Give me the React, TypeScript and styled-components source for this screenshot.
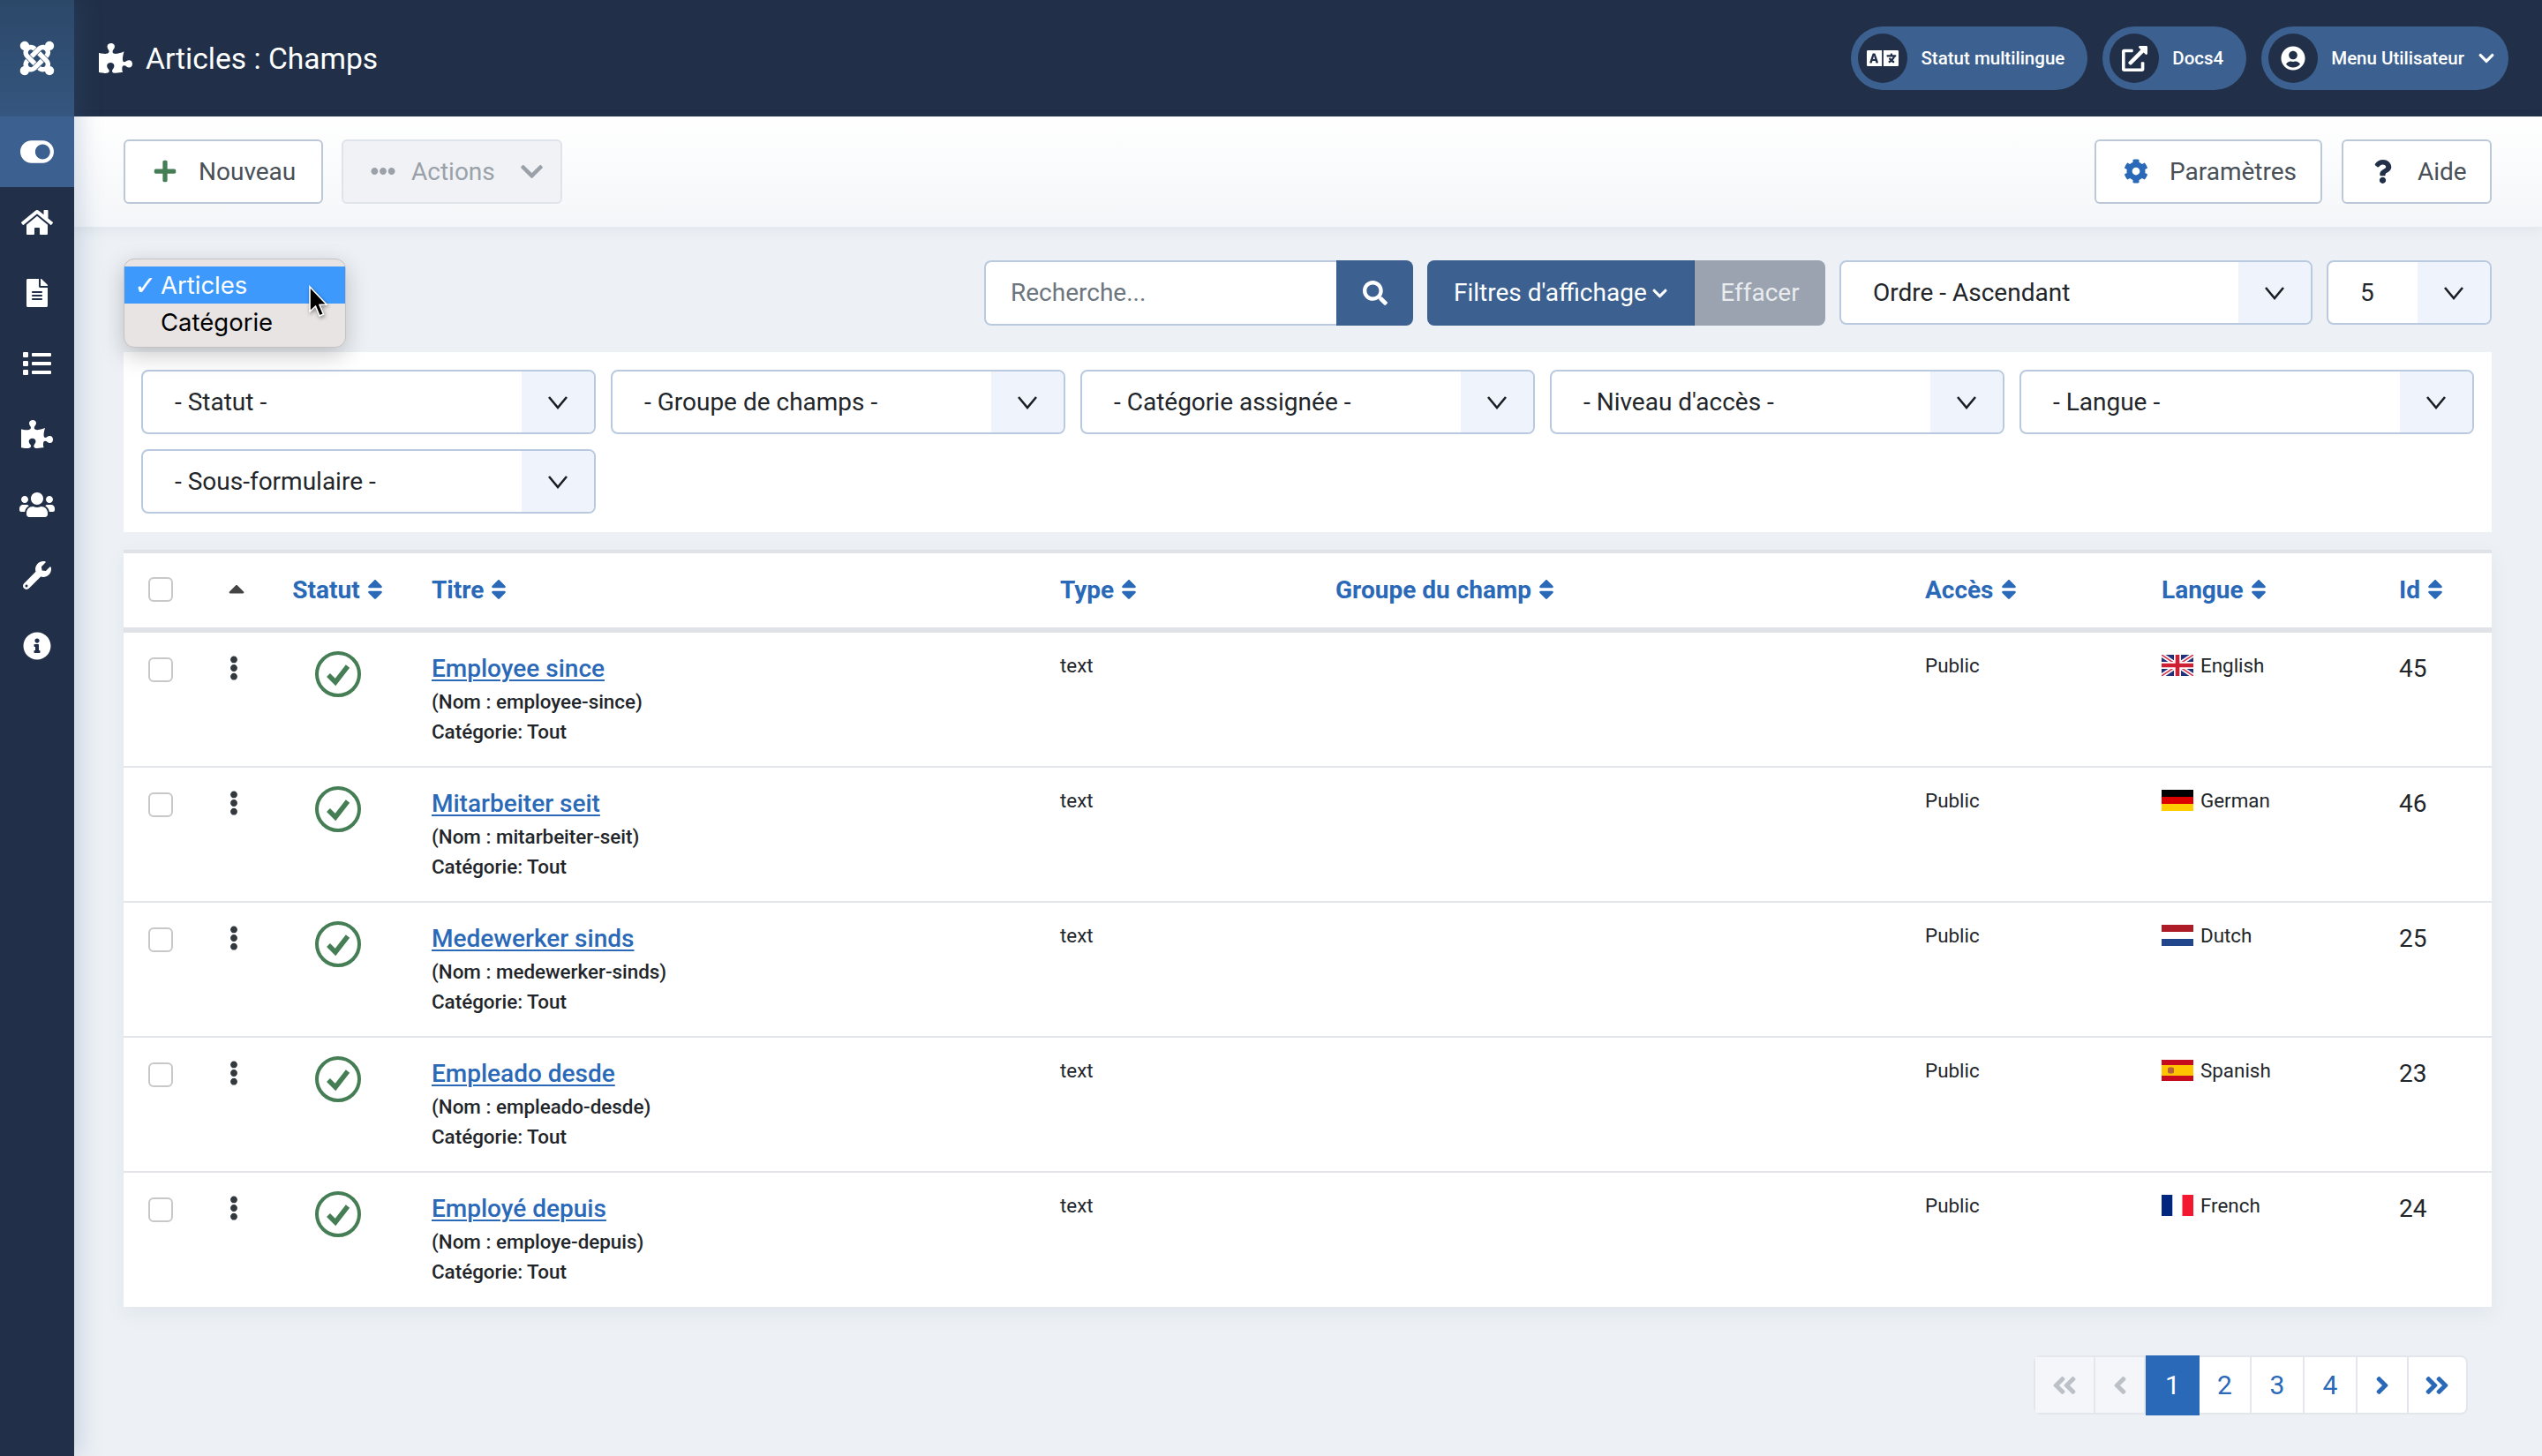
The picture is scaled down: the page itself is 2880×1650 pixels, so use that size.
import React from "react";
import styled, { createGlobalStyle } from "styled-components";
import {
  FaJoomla, FaPuzzlePiece, FaToggleOn, FaHome, FaFileAlt, FaList, FaUsers, FaWrench, FaInfoCircle,
  FaPlus, FaEllipsisH, FaChevronDown, FaCog, FaQuestion, FaLanguage, FaExternalLinkAlt, FaUserCircle,
  FaSearch, FaEllipsisV, FaSort, FaCaretUp, FaAngleDoubleLeft, FaAngleDoubleRight, FaAngleLeft, FaAngleRight,
} from "react-icons/fa";

const Global = createGlobalStyle`
  html, body { margin: 0; padding: 0; height: 100%; overflow: hidden; background: #edf1f5; }
  body { font-family: Roboto, "Liberation Sans", sans-serif; color: #22262a; -webkit-font-smoothing: antialiased; }
  * { box-sizing: border-box; }
`;

const Shell = styled.div`display: flex; width: 2880px; height: 1650px; background: #edf1f5; overflow: hidden;`;
const Sidebar = styled.aside`
  width: 84px; flex: none; background: #213048; display: flex; flex-direction: column; position: relative; z-index: 2;
  box-shadow: 6px 0 26px rgba(60, 97, 144, .22);
`;
const LogoCell = styled.div`
  height: 132px; display: flex; align-items: center; justify-content: center; color: #fff; font-size: 44px;
  background: linear-gradient(180deg, #2c4869 0%, #35567f 100%);
`;
const NavItem = styled.div<{ $active?: boolean; $size?: number }>`
  height: 80px; display: flex; align-items: center; justify-content: center; color: #fff;
  font-size: ${(p) => p.$size ?? 32}px;
  background: ${(p) => (p.$active ? "#3c6190" : "transparent")};
`;
const Main = styled.main`flex: 1; min-width: 0; display: flex; flex-direction: column;`;
const Header = styled.header`
  height: 132px; background: #213048; display: flex; align-items: center; padding: 0 38px 0 28px;
`;
const Title = styled.h1`
  margin: 0; flex: 1; display: flex; align-items: center; gap: 15px; color: #fff; font-size: 33.6px; font-weight: 400;
  svg { width: 38px; height: 34px; }
`;
const Pills = styled.div`display: flex; gap: 17px;`;
const Pill = styled.div`
  height: 72px; border-radius: 36px; background: #3c6190; display: flex; align-items: center; padding: 0 26px 0 8px;
  color: #fff; font-size: 20.5px; font-weight: 500; gap: 15px;
`;
const PillIcon = styled.span<{ $size: number }>`
  width: 56px; height: 56px; border-radius: 50%; background: #213048; display: flex; align-items: center;
  justify-content: center; font-size: ${(p) => p.$size}px; flex: none;
`;
const PillCaret = styled.span`font-size: 20px; display: flex; margin-right: -11px;`;
const Toolbar = styled.div`
  height: 125px; display: flex; align-items: center; justify-content: space-between; padding: 0 57px 1px 56px;
  background: linear-gradient(180deg, #ffffff 0%, #f4f6f9 100%);
  box-shadow: 0 4px 14px rgba(60, 97, 144, .08); position: relative;
`;
const ToolGroup = styled.div<{ $gap: number }>`display: flex; gap: ${(p) => p.$gap}px;`;
const ToolButton = styled.button<{ $w: number; $disabled?: boolean; $gap: number }>`
  width: ${(p) => p.$w}px; height: 73px; border-radius: 6px; font-family: inherit; font-size: 28px;
  border: 2px solid ${(p) => (p.$disabled ? "#dfe4ea" : "#bcc8d8")};
  background: ${(p) => (p.$disabled ? "#f0f2f5" : "#fff")};
  color: ${(p) => (p.$disabled ? "#9aa1a9" : "#495057")};
  display: flex; align-items: center; padding: 0 0 0 31px; gap: ${(p) => p.$gap}px;
`;
const ToolIcon = styled.span<{ $c?: string; $size: number; $ml?: number }>`
  display: flex; color: ${(p) => p.$c ?? "inherit"}; font-size: ${(p) => p.$size}px; margin-left: ${(p) => p.$ml ?? 0}px;
`;
const Content = styled.div`padding: 38px 57px 0 56px; position: relative;`;
const FilterBar = styled.div`display: flex; justify-content: flex-end; gap: 16px; height: 74px;`;
const SearchBox = styled.div`display: flex; height: 74px;`;
const SearchInput = styled.div`
  width: 399px; background: #fff; border: 2px solid #b9cae0; border-right: 0; border-radius: 8px 0 0 8px;
  display: flex; align-items: center; padding: 0 0 2px 28px; font-size: 28px; color: #6c757d;
`;
const SearchBtn = styled.div`
  width: 87px; background: #3c6190; border-radius: 0 8px 8px 0; color: #fff; font-size: 28px;
  display: flex; align-items: center; justify-content: center;
`;
const SplitBtn = styled.div`display: flex; height: 74px;`;
const FilterBtn = styled.div`
  width: 303px; background: #3c6190; border-radius: 8px 0 0 8px; color: #fff; font-size: 28px;
  border-right: 1px solid #2f4f78;
  display: flex; align-items: center; padding: 0 0 2px 30px; gap: 5px;
  svg { font-size: 19px; margin-top: 2px; }
`;
const ClearBtn = styled.div`
  width: 148px; background: #9aa3af; border-radius: 0 8px 8px 0; color: #e9ecef; font-size: 28px; padding-bottom: 2px;
  display: flex; align-items: center; justify-content: center;
`;
const SelectBox = styled.div<{ $w?: number }>`
  width: ${(p) => p.$w ?? 515}px; height: 73px; flex: none; background: #fff;
  border: 2px solid #b9cae0; border-radius: 8px; display: flex; overflow: hidden; font-size: 28px; color: #22262a;
`;
const SelectText = styled.div`flex: 1; display: flex; align-items: center; padding-left: 36px; white-space: nowrap;`;
const SelectChevron = styled.div`
  width: 82px; flex: none; background: #eff4fc; display: flex; align-items: center; justify-content: center;
`;
const FilterPanel = styled.div`
  margin-top: 30px; background: #fff; padding: 20px; height: 204px; display: flex; flex-wrap: wrap;
  gap: 17px; align-content: flex-start;
`;
const TableCard = styled.div`
  margin-top: 20px; background: #fff; border-top: 4px solid #dfe3e8; box-shadow: 0 8px 20px rgba(60, 97, 144, .08);
`;
const cols = "120px 17px 212px 712px 312px 668px 268px 269px 105px";
const HeadRow = styled.div`
  display: grid; grid-template-columns: ${cols}; height: 90px; border-bottom: 6px solid #dfe3e8; align-items: center;
  color: #2a69b8; font-size: 28px; font-weight: 700; padding-bottom: 2px;
`;
const BodyRow = styled.div<{ $last?: boolean }>`
  display: grid; grid-template-columns: ${cols}; height: ${(p) => (p.$last ? 152 : 153)}px;
  border-bottom: ${(p) => (p.$last ? "0" : "2.5px solid #e2e6ea")}; align-items: start; font-size: 22.4px;
`;
const HeadCell = styled.div<{ $center?: boolean }>`
  display: flex; align-items: center; gap: 3px; white-space: nowrap;
  justify-content: ${(p) => (p.$center ? "center" : "flex-start")};
  padding-left: ${(p) => (p.$center ? 4 : 0)}px;
  svg { font-size: 28px; margin-left: -6px; margin-right: 6px; position: relative; left: 6px; }
`;
const CheckCell = styled.div<{ $top?: number }>`padding-left: 28px; padding-top: ${(p) => p.$top ?? 0}px; display: flex;`;
const Check = styled.span`
  width: 28px; height: 28px; border: 2px solid #c8c8c8; border-radius: 6px; background: #fff; display: block;
`;
const Caret = styled.span`display: flex; color: #444; font-size: 30px; margin-top: -2px; margin-left: -1px; svg { display: block; }`;
const DotsCell = styled.div`padding-top: 26px; font-size: 28px; color: #33383d; display: flex; svg { margin-left: -7px; }`;
const StatusCell = styled.div`padding-top: 21px; display: flex; justify-content: center;`;
const TitleCell = styled.div`padding-top: 20px; font-weight: 500;`;
const ItemLink = styled.a`
  display: block; font-size: 28px; line-height: 42px; color: #2a69b8; text-decoration: underline; text-decoration-thickness: 2px;
  text-underline-offset: 3px; width: fit-content;
`;
const SubLine = styled.div`font-size: 22.4px; line-height: 33.5px; color: #22262a;`;
const PlainCell = styled.div`padding-top: 20px; line-height: 34px; font-size: 22.4px;`;
const LangCell = styled.div`padding-top: 20px; line-height: 34px; font-size: 22.4px; display: flex; align-items: center; gap: 8px; svg { flex: none; }`;
const IdCell = styled.div`padding-top: 20px; line-height: 42px; font-size: 28px;`;

const Pager = styled.div`
  margin: 55px 27px 0 auto; width: 492px; height: 67px; display: flex; border: 2.5px solid #e3e7eb; border-radius: 8px; background: #fff;
  position: relative;
`;
const PageCell = styled.div<{ $w: number; $disabled?: boolean; $active?: boolean }>`
  width: ${(p) => p.$w}px; flex: none; display: flex; align-items: center; justify-content: center; font-size: 30px;
  border-right: ${(p) => (p.$active ? "0" : "2.5px solid #e3e7eb")};
  background: ${(p) => (p.$active ? "#2a69b8" : p.$disabled ? "#f4f6f9" : "transparent")};
  color: ${(p) => (p.$active ? "#fff" : p.$disabled ? "#bcc1c7" : "#2a69b8")};
  margin: ${(p) => (p.$active ? "-2.5px 0" : "0")};
  &:last-child { border-right: 0; }
  svg { font-size: 32px; }
`;
const Menu = styled.div`
  position: absolute; left: 56px; top: 36px; width: 252px; height: 101px; background: #e9e4e4; border-radius: 12px;
  border: 1px solid #c4c2c2; padding-top: 8px; box-shadow: 0 8px 26px rgba(0, 0, 0, .22); z-index: 5;
  font-family: Inter, "Liberation Sans", sans-serif; font-size: 27.5px; color: #000;
`;
const MenuItem = styled.div<{ $on?: boolean }>`
  height: 42px; display: flex; align-items: center; padding-left: 41px; position: relative;
  background: ${(p) => (p.$on ? "#3d9afc" : "transparent")}; color: ${(p) => (p.$on ? "#fff" : "#000")};
`;
const Tick = styled.span`position: absolute; left: 11px; font-family: "DejaVu Sans", sans-serif; font-size: 30px;`;
const Pointer = styled.svg`position: absolute; left: 208px; top: 29px; filter: drop-shadow(1px 2px 2px rgba(0,0,0,.4));`;

const Chevron = () => (
  <svg width="24" height="16" viewBox="0 0 24 16" fill="none">
    <path d="M2 2 L12 14 L22 2" stroke="#1b1f24" strokeWidth="2.6" />
  </svg>
);
const StatusIcon = () => (
  <svg width="52" height="52" viewBox="0 0 52 52" fill="none">
    <circle cx="26" cy="26" r="24" stroke="#457d54" strokeWidth="4" />
    <path d="M15 27 L23 35 L37 17" stroke="#457d54" strokeWidth="5.5" />
  </svg>
);
const flags: Record<string, React.ReactNode> = {
  gb: (
    <svg width="36" height="24" viewBox="0 0 36 24">
      <rect width="36" height="24" fill="#21307c" />
      <path d="M0 0 36 24M36 0 0 24" stroke="#fff" strokeWidth="5" />
      <path d="M0 0 36 24M36 0 0 24" stroke="#d8344c" strokeWidth="1.6" />
      <path d="M18 0V24M0 12H36" stroke="#fff" strokeWidth="8" />
      <path d="M18 0V24M0 12H36" stroke="#cf1f32" strokeWidth="4.6" />
    </svg>
  ),
  de: (
    <svg width="36" height="24" viewBox="0 0 36 24">
      <rect width="36" height="8" fill="#000" /><rect y="8" width="36" height="8" fill="#dd0000" /><rect y="16" width="36" height="8" fill="#ffce00" />
    </svg>
  ),
  nl: (
    <svg width="36" height="24" viewBox="0 0 36 24">
      <rect width="36" height="8" fill="#ae1c28" /><rect y="8" width="36" height="8" fill="#fff" /><rect y="16" width="36" height="8" fill="#21468b" />
    </svg>
  ),
  es: (
    <svg width="36" height="24" viewBox="0 0 36 24">
      <rect width="36" height="24" fill="#c60b1e" /><rect y="6" width="36" height="12" fill="#ffc400" />
      <rect x="7" y="8.5" width="7" height="7" rx="2" fill="#b5603a" />
    </svg>
  ),
  fr: (
    <svg width="36" height="24" viewBox="0 0 36 24">
      <rect width="12.5" height="24" fill="#00267f" /><rect x="12.5" width="11" height="24" fill="#fff" /><rect x="23.5" width="12.5" height="24" fill="#f31830" />
    </svg>
  ),
};

const rows = [
  { t: "Employee since", a: "employee-since", f: "gb", l: "English", id: 45 },
  { t: "Mitarbeiter seit", a: "mitarbeiter-seit", f: "de", l: "German", id: 46 },
  { t: "Medewerker sinds", a: "medewerker-sinds", f: "nl", l: "Dutch", id: 25 },
  { t: "Empleado desde", a: "empleado-desde", f: "es", l: "Spanish", id: 23 },
  { t: "Employé depuis", a: "employe-depuis", f: "fr", l: "French", id: 24 },
];
const filters = ["- Statut -", "- Groupe de champs -", "- Catégorie assignée -", "- Niveau d'accès -", "- Langue -", "- Sous-formulaire -"];

export default function App() {
  return (
    <Shell>
      <Global />
      <Sidebar>
        <LogoCell><FaJoomla /></LogoCell>
        <NavItem $active $size={38}><FaToggleOn /></NavItem>
        <NavItem $size={36}><FaHome /></NavItem>
        <NavItem><FaFileAlt /></NavItem>
        <NavItem><FaList /></NavItem>
        <NavItem $size={36}><FaPuzzlePiece /></NavItem>
        <NavItem $size={40}><FaUsers /></NavItem>
        <NavItem><FaWrench /></NavItem>
        <NavItem><FaInfoCircle /></NavItem>
      </Sidebar>
      <Main>
        <Header>
          <Title><FaPuzzlePiece />Articles : Champs</Title>
          <Pills>
            <Pill><PillIcon $size={36}><FaLanguage /></PillIcon>Statut multilingue</Pill>
            <Pill><PillIcon $size={29}><FaExternalLinkAlt /></PillIcon>Docs4</Pill>
            <Pill><PillIcon $size={28}><FaUserCircle /></PillIcon>Menu Utilisateur<PillCaret><FaChevronDown /></PillCaret></Pill>
          </Pills>
        </Header>
        <Toolbar>
          <ToolGroup $gap={21}>
            <ToolButton $w={226} $gap={24}><ToolIcon $c="#457d54" $size={28}><FaPlus /></ToolIcon>Nouveau</ToolButton>
            <ToolButton $w={250} $disabled $gap={18}><ToolIcon $size={28}><FaEllipsisH /></ToolIcon>Actions<ToolIcon $size={29} $ml={9}><FaChevronDown /></ToolIcon></ToolButton>
          </ToolGroup>
          <ToolGroup $gap={22}>
            <ToolButton $w={258} $gap={24}><ToolIcon $c="#2a69b8" $size={28}><FaCog /></ToolIcon>Paramètres</ToolButton>
            <ToolButton $w={170} $gap={26}><ToolIcon $c="#213048" $size={27}><FaQuestion /></ToolIcon>Aide</ToolButton>
          </ToolGroup>
        </Toolbar>
        <Content>
          <Menu>
            <MenuItem $on><Tick>✓</Tick>Articles</MenuItem>
            <MenuItem>Catégorie</MenuItem>
            <Pointer width="22" height="38" viewBox="0 0 22 38">
              <path d="M2 2 V30 L8.5 24 L13 35 L17.5 33 L13 22.5 L21 22 Z" fill="#000" stroke="#fff" strokeWidth="1.6" />
            </Pointer>
          </Menu>
          <FilterBar>
            <SearchBox>
              <SearchInput>Recherche...</SearchInput>
              <SearchBtn><FaSearch /></SearchBtn>
            </SearchBox>
            <SplitBtn>
              <FilterBtn>Filtres d'affichage<FaChevronDown /></FilterBtn>
              <ClearBtn>Effacer</ClearBtn>
            </SplitBtn>
            <SelectBox $w={536}><SelectText>Ordre - Ascendant</SelectText><SelectChevron><Chevron /></SelectChevron></SelectBox>
            <SelectBox $w={187}><SelectText>5</SelectText><SelectChevron><Chevron /></SelectChevron></SelectBox>
          </FilterBar>
          <FilterPanel>
            {filters.map((f) => (
              <SelectBox key={f}><SelectText>{f}</SelectText><SelectChevron><Chevron /></SelectChevron></SelectBox>
            ))}
          </FilterPanel>
          <TableCard>
            <HeadRow>
              <CheckCell><Check /></CheckCell>
              <Caret><FaCaretUp /></Caret>
              <HeadCell $center>Statut<FaSort /></HeadCell>
              <HeadCell>Titre<FaSort /></HeadCell>
              <HeadCell>Type<FaSort /></HeadCell>
              <HeadCell>Groupe du champ<FaSort /></HeadCell>
              <HeadCell>Accès<FaSort /></HeadCell>
              <HeadCell>Langue<FaSort /></HeadCell>
              <HeadCell>Id<FaSort /></HeadCell>
            </HeadRow>
            {rows.map((r, i) => (
              <BodyRow key={r.id} $last={i === rows.length - 1}>
                <CheckCell $top={28}><Check /></CheckCell>
                <DotsCell><FaEllipsisV /></DotsCell>
                <StatusCell><StatusIcon /></StatusCell>
                <TitleCell>
                  <ItemLink>{r.t}</ItemLink>
                  <SubLine>(Nom : {r.a})</SubLine>
                  <SubLine>Catégorie: Tout</SubLine>
                </TitleCell>
                <PlainCell>text</PlainCell>
                <div />
                <PlainCell>Public</PlainCell>
                <LangCell>{flags[r.f]}{r.l}</LangCell>
                <IdCell>{r.id}</IdCell>
              </BodyRow>
            ))}
          </TableCard>
          <Pager>
            <PageCell $w={68} $disabled><FaAngleDoubleLeft /></PageCell>
            <PageCell $w={57} $disabled><FaAngleLeft /></PageCell>
            <PageCell $w={61} $active>1</PageCell>
            <PageCell $w={59}>2</PageCell>
            <PageCell $w={60}>3</PageCell>
            <PageCell $w={60}>4</PageCell>
            <PageCell $w={58}><FaAngleRight /></PageCell>
            <PageCell $w={64}><FaAngleDoubleRight /></PageCell>
          </Pager>
        </Content>
      </Main>
    </Shell>
  );
}
